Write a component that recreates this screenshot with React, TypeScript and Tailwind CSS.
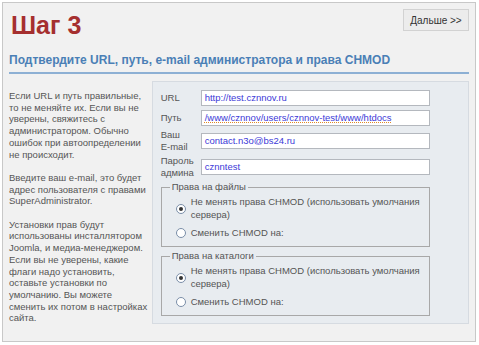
import React from 'react';

const Radio: React.FC<{ checked?: boolean }> = ({ checked }) => (
  <span className="flex h-[10px] w-[10px] shrink-0 items-center justify-center rounded-full border border-[#7a8ea8] bg-white">
    {checked && <span className="h-[4px] w-[4px] rounded-full bg-[#333]" />}
  </span>
);

const Field: React.FC<{ label: React.ReactNode; value: string; underline?: boolean; tall?: boolean }> = ({
  label,
  value,
  underline,
  tall,
}) => (
  <div className={`flex items-center ${tall ? 'h-[26px]' : 'h-[20px]'}`}>
    <div className="w-[40px] text-[9.5px] leading-[12px] text-[#555]">{label}</div>
    <div className="flex h-[16px] w-[229px] items-center border border-[#b4b8be] bg-white px-[3px] text-[9.5px] text-[#3d3ad8]">
      <span className={underline ? 'underline decoration-dotted decoration-[#e08a2a]' : ''}>{value}</span>
    </div>
  </div>
);

const ChmodGroup: React.FC<{ legend: string }> = ({ legend }) => (
  <fieldset className="mx-0 h-[66px] border border-[#a8a8a8] pb-[8px] pl-[8px] pr-[4px] pt-[3px]">
    <legend className="px-[2px] text-[9.5px] leading-[12px] text-[#555]">{legend}</legend>
    <div className="ml-[6px] flex items-center gap-[5px]">
      <Radio checked />
      <div className="whitespace-nowrap text-[9.5px] leading-[12.5px] text-[#555]">
        Не менять права CHMOD (использовать умолчания
        <br />
        сервера)
      </div>
    </div>
    <div className="ml-[6px] mt-[6px] flex items-center gap-[5px]">
      <Radio />
      <div className="text-[9.5px] leading-[12px] text-[#555]">Сменить CHMOD на:</div>
    </div>
  </fieldset>
);

export default function App() {
  return (
    <div className="h-[345px] w-[479px] bg-white p-[2px] font-['Liberation_Sans',Arial,sans-serif]">
      <div className="h-[340px] w-[474px] border border-[#c8c8c8] bg-[#f1f1f1] px-[6px]">
        <div className="flex items-start justify-between pt-[5px]">
          <h1 className="pl-[2px] text-[25px] font-bold leading-[34px] text-[#a52f2f]">Шаг 3</h1>
          <button className="mt-[1px] h-[22px] w-[66px] border border-[#d2d2d2] bg-[#ececec] text-[10px] text-[#333]">
            Дальше &gt;&gt;
          </button>
        </div>
        <div className="mt-[11px] border-b-2 border-[#8db0d4] pb-[4px] text-[12px] font-bold leading-[15px] text-[#4a7fb6]">
          Подтвердите URL, путь, e-mail администратора и права CHMOD
        </div>
        <div className="mt-[7px] flex">
          <div className="mr-[3px] w-[140px] pt-[9px] text-[9.5px] leading-[11.7px] text-[#555]">
            <p>
              Если URL и путь правильные, то не меняйте их. Если вы не уверены, свяжитесь с администратором. Обычно
              ошибок при автоопределении не происходит.
            </p>
            <p className="mt-[11.7px]">Введите ваш e-mail, это будет адрес пользователя с правами SuperAdministrator.</p>
            <p className="mt-[11.7px]">
              Установки прав будут использованы инсталлятором Joomla, и медиа-менеджером. Если вы не уверены, какие
              флаги надо установить, оставьте установки по умолчанию. Вы можете сменить их потом в настройках сайта.
            </p>
          </div>
          <div className="h-[243px] w-[318px] border border-[#d6dbe1] bg-[#e8ecf0] px-[8px] pt-[6px]">
            <Field label="URL" value="http://test.cznnov.ru" />
            <Field label="Путь" value="/www/cznnov/users/cznnov-test/www/htdocs" underline />
            <Field
              tall
              label={
                <>
                  Ваш
                  <br />
                  E-mail
                </>
              }
              value="contact.n3o@bs24.ru"
            />
            <Field
              tall
              label={
                <>
                  Пароль
                  <br />
                  админа
                </>
              }
              value="cznntest"
            />
            <div className="mt-[1px] flex w-[269px] flex-col gap-[3px]">
              <ChmodGroup legend="Права на файлы" />
              <ChmodGroup legend="Права на каталоги" />
            </div>
          </div>
        </div>
      </div>
    </div>
  );
}
